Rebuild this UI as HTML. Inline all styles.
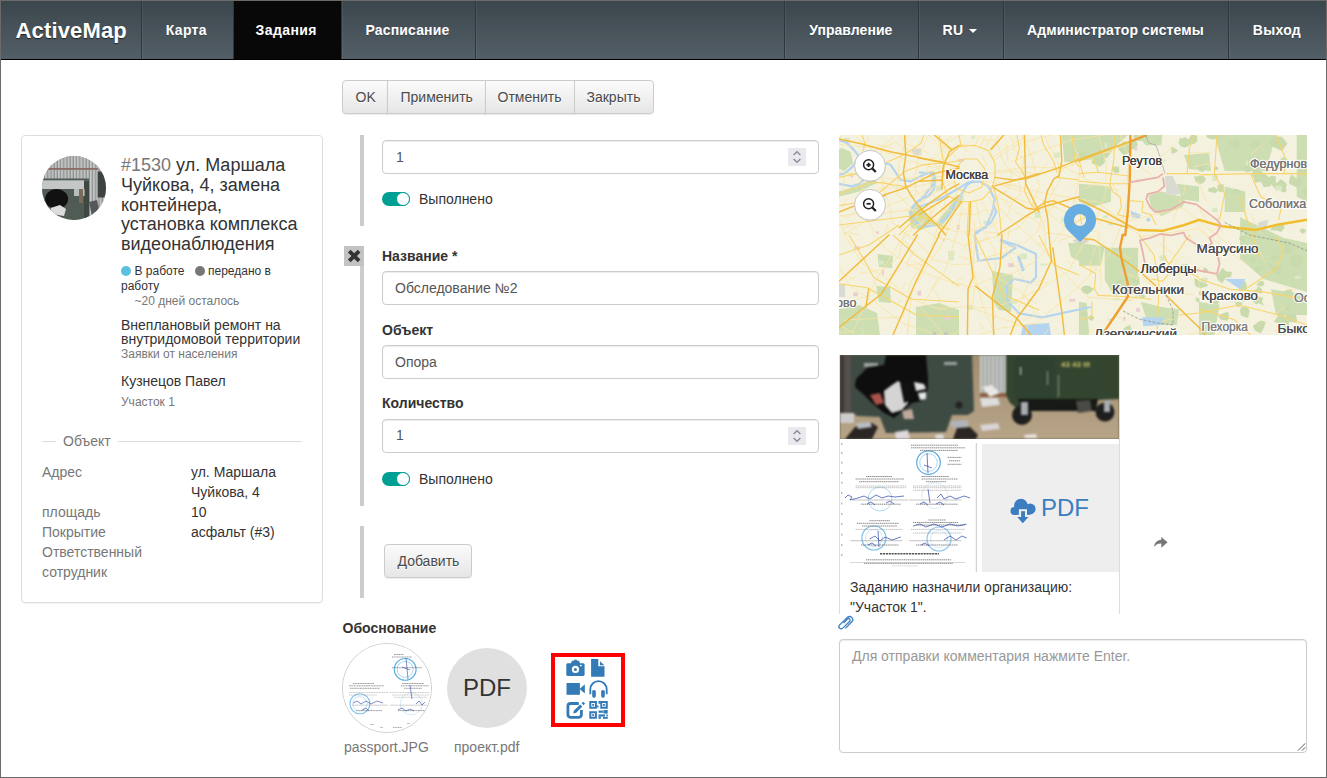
<!DOCTYPE html>
<html><head><meta charset="utf-8">
<style>
*{box-sizing:border-box;margin:0;padding:0}
html,body{width:1327px;height:778px;overflow:hidden;background:#fff}
body{font-family:"Liberation Sans",sans-serif;font-size:14px;color:#333;position:relative}
.frame{position:absolute;left:0;top:0;width:1327px;height:778px;border:1px solid #6a6a6a;z-index:50;pointer-events:none}
.abs{position:absolute}
.nav{position:absolute;left:0;top:0;width:1327px;height:60px;background:linear-gradient(#3b454c,#535f67);border-bottom:1px solid #000}
.nav .it{position:absolute;top:1px;height:59px;line-height:59px;color:#fff;font-weight:bold;font-size:14px;white-space:nowrap;text-shadow:0 1px 0 rgba(0,0,0,.25)}
.caret{display:inline-block;width:0;height:0;border-left:4px solid transparent;border-right:4px solid transparent;border-top:4px solid #fff;vertical-align:middle;margin-left:2px;margin-top:-2px}
.nav .dv{position:absolute;top:1px;width:1px;height:58px;background:#2f373d;box-shadow:1px 0 0 rgba(255,255,255,.06)}
.brand{position:absolute;left:15.5px;letter-spacing:.15px;top:1px;height:59px;line-height:59px;color:#fff;font-weight:bold;font-size:22px;text-shadow:0 1px 1px rgba(0,0,0,.6)}
.t{position:absolute;white-space:nowrap}
.btn{position:absolute;border:1px solid #ccc;background:linear-gradient(#fbfbfb,#e6e6e6);box-shadow:inset 0 1px 0 rgba(255,255,255,.15),0 1px 1px rgba(0,0,0,.075)}
.inp{position:absolute;border:1px solid #ccc;border-radius:4px;background:#fff;box-shadow:inset 0 1px 1px rgba(0,0,0,.075)}
.bar{position:absolute;left:360px;width:4px;background:#ccc}
.tog{position:absolute;width:28px;height:14px;border-radius:7px;background:#009f93}
.tog:after{content:"";position:absolute;right:0;top:0;width:14px;height:14px;border-radius:50%;background:#fff;border:1.5px solid #009f93;box-sizing:border-box}
.spin{position:absolute;width:18px;height:18px;background:#e9e9ee}
</style></head><body>
<div class="nav">
  <div class="brand">ActiveMap</div>
  <div class="dv" style="left:141px"></div>
  <div class="dv" style="left:233px"></div>
  <div class="abs" style="left:234px;top:1px;width:107px;height:58px;background:#080808"></div>
  <div class="dv" style="left:341px"></div>
  <div class="dv" style="left:475px"></div>
  <div class="dv" style="left:784px"></div>
  <div class="dv" style="left:918px"></div>
  <div class="dv" style="left:1003px"></div>
  <div class="dv" style="left:1228px"></div>
  <div class="it" style="left:165.8px;letter-spacing:.3px">Карта</div>
  <div class="it" style="left:255.6px;letter-spacing:.4px">Задания</div>
  <div class="it" style="left:365.5px;letter-spacing:.15px">Расписание</div>
  <div class="it" style="left:809.2px;letter-spacing:.05px">Управление</div>
  <div class="it" style="left:942.5px;letter-spacing:.5px">RU</div>
  <div class="abs" style="left:969px;top:29px;width:0;height:0;border-left:4px solid transparent;border-right:4px solid transparent;border-top:4px solid #fff"></div>
  <div class="it" style="left:1027px;letter-spacing:.1px">Администратор системы</div>
  <div class="it" style="left:1252.8px;letter-spacing:.3px">Выход</div>
</div>
<div class="btn" style="left:342px;top:80px;width:46px;height:34px;border-radius:4px 0 0 4px"></div>
<div class="btn" style="left:387px;top:80px;width:99px;height:34px"></div>
<div class="btn" style="left:485px;top:80px;width:90px;height:34px"></div>
<div class="btn" style="left:574px;top:80px;width:80px;height:34px;border-radius:0 4px 4px 0"></div>
<div class="t" style="left:355.5px;top:90px;font-size:14px;line-height:14px;color:#4a4a4a;font-weight:normal;text-shadow:0 1px 0 #fff">OK</div>
<div class="t" style="left:400.5px;top:90px;font-size:14px;line-height:14px;color:#4a4a4a;font-weight:normal;text-shadow:0 1px 0 #fff">Применить</div>
<div class="t" style="left:497.5px;top:90px;font-size:14px;line-height:14px;color:#4a4a4a;font-weight:normal;text-shadow:0 1px 0 #fff">Отменить</div>
<div class="t" style="left:586.5px;top:90px;font-size:14px;line-height:14px;color:#4a4a4a;font-weight:normal;text-shadow:0 1px 0 #fff">Закрыть</div>
<div class="abs" style="left:21px;top:135px;width:302px;height:468px;border:1px solid #ddd;border-radius:4px;box-shadow:0 1px 1px rgba(0,0,0,.05)"></div>
<div id="avatar" class="abs" style="left:42px;top:156px;width:64px;height:64px;border-radius:50%;overflow:hidden;background:#999"><svg width="64" height="64" viewBox="0 0 64 64" style="position:absolute;left:0;top:0;filter:blur(0.7px)">
<defs><pattern id="corr2" width="3.2" height="10" patternUnits="userSpaceOnUse"><rect width="3.2" height="10" fill="#a9abaa"/><rect width="1.2" height="10" fill="#c9cbca"/><rect x="2.4" width="0.8" height="10" fill="#8a8c8b"/></pattern></defs><g>
<rect width="64" height="64" fill="url(#corr2)"/>
<rect x="5.9" y="12" width="50" height="1.8" fill="#8a6a64"/>
<rect x="55.7" y="15.5" width="8.3" height="26" fill="#3e4342"/>
<rect x="0" y="22.5" width="47" height="2" fill="#50595a"/>
<rect x="0" y="24.5" width="42" height="8.5" fill="#c4c7c5"/>
<rect x="0" y="33" width="47" height="31" fill="#4f5b53"/>
<rect x="42" y="24.5" width="5" height="40" fill="#3e4842"/>
<rect x="32" y="33" width="10.6" height="7" fill="#b8bcbb"/>
<rect x="37" y="33" width="4" height="14" fill="#7a6a5a"/>
<ellipse cx="14.6" cy="43" rx="11.5" ry="10" fill="#111"/>
<path d="M8.5 52L18 49L24 53L22 60L10 58Z" fill="#dcdcdc"/>
<path d="M47 46L55 44L58 58L50 60Z" fill="#55585a"/>
<path d="M52 57L60 54L62 60L55 62Z" fill="#d8c9c0"/>
</g></svg>
</div>
<div class="t" style="left:121px;top:156px;font-size:18px;line-height:18px;color:#333;font-weight:normal;"><span style="color:#777">#1530</span> ул. Маршала</div>
<div class="t" style="left:121px;top:176px;font-size:18px;line-height:18px;color:#333;font-weight:normal;">Чуйкова, 4, замена</div>
<div class="t" style="left:121px;top:196px;font-size:18px;line-height:18px;color:#333;font-weight:normal;">контейнера,</div>
<div class="t" style="left:121px;top:215px;font-size:18px;line-height:18px;color:#333;font-weight:normal;">установка комплекса</div>
<div class="t" style="left:121px;top:235px;font-size:18px;line-height:18px;color:#333;font-weight:normal;">видеонаблюдения</div>
<div class="abs" style="left:121px;top:266px;width:10px;height:10px;border-radius:50%;background:#5bc0de"></div>
<div class="t" style="left:134.5px;top:265px;font-size:12px;line-height:12px;color:#333;font-weight:normal;">В работе</div>
<div class="abs" style="left:195px;top:266px;width:10px;height:10px;border-radius:50%;background:#777"></div>
<div class="t" style="left:208px;top:265px;font-size:12px;line-height:12px;color:#333;font-weight:normal;">передано в</div>
<div class="t" style="left:121px;top:280px;font-size:12px;line-height:12px;color:#333;font-weight:normal;">работу</div>
<div class="t" style="left:134.5px;top:295px;font-size:12px;line-height:12px;color:#777;font-weight:normal;">~20 дней осталось</div>
<div class="t" style="left:121px;top:318px;font-size:14px;line-height:14px;color:#333;font-weight:normal;">Внеплановый ремонт на</div>
<div class="t" style="left:121px;top:332px;font-size:14px;line-height:14px;color:#333;font-weight:normal;">внутридомовой территории</div>
<div class="t" style="left:121px;top:348px;font-size:12px;line-height:12px;color:#777;font-weight:normal;">Заявки от населения</div>
<div class="t" style="left:121px;top:374px;font-size:14px;line-height:14px;color:#333;font-weight:normal;">Кузнецов Павел</div>
<div class="t" style="left:121px;top:396px;font-size:12px;line-height:12px;color:#777;font-weight:normal;">Участок 1</div>
<div class="abs" style="left:42px;top:441px;width:14px;height:1px;background:#ddd"></div>
<div class="abs" style="left:118px;top:441px;width:184px;height:1px;background:#ddd"></div>
<div class="t" style="left:63px;top:434px;font-size:14px;line-height:14px;color:#777;font-weight:normal;">Объект</div>
<div class="t" style="left:42px;top:465px;font-size:14px;line-height:14px;color:#777;font-weight:normal;">Адрес</div>
<div class="t" style="left:191px;top:465px;font-size:14px;line-height:14px;color:#333;font-weight:normal;">ул. Маршала</div>
<div class="t" style="left:191px;top:485px;font-size:14px;line-height:14px;color:#333;font-weight:normal;">Чуйкова, 4</div>
<div class="t" style="left:42px;top:505px;font-size:14px;line-height:14px;color:#777;font-weight:normal;">площадь</div>
<div class="t" style="left:191px;top:505px;font-size:14px;line-height:14px;color:#333;font-weight:normal;">10</div>
<div class="t" style="left:42px;top:525px;font-size:14px;line-height:14px;color:#777;font-weight:normal;">Покрытие</div>
<div class="t" style="left:191px;top:525px;font-size:14px;line-height:14px;color:#333;font-weight:normal;">асфальт (#3)</div>
<div class="t" style="left:42px;top:545px;font-size:14px;line-height:14px;color:#777;font-weight:normal;">Ответственный</div>
<div class="t" style="left:42px;top:565px;font-size:14px;line-height:14px;color:#777;font-weight:normal;">сотрудник</div>
<div class="bar" style="top:135px;height:91px"></div>
<div class="inp" style="left:382px;top:140px;width:437px;height:34px"></div>
<div class="spin" style="left:788px;top:148px"></div>
<svg class="abs" style="left:788px;top:148px" width="18" height="18" viewBox="0 0 18 18"><path d="M5.6 7L9 3.8L12.4 7M5.6 11L9 14.2L12.4 11" fill="none" stroke="#8b8b99" stroke-width="1.4"/></svg>
<div class="t" style="left:396px;top:150px;font-size:14px;line-height:14px;color:#555;font-weight:normal;">1</div>
<div class="tog" style="left:382px;top:192px"></div>
<div class="t" style="left:419px;top:192px;font-size:14px;line-height:14px;color:#333;font-weight:normal;">Выполнено</div>
<div class="bar" style="top:246px;height:260px"></div>
<div class="abs" style="left:344px;top:246px;width:20px;height:20px;background:#c3c3c3"></div>
<svg class="abs" style="left:344px;top:246px" width="20" height="20" viewBox="344 246 20 20"><path d="M349.3 251.1L359.1 260.9M359.1 251.1L349.3 260.9" stroke="#333" stroke-width="3.9"/></svg>
<div class="t" style="left:382px;top:249px;font-size:14px;line-height:14px;color:#333;font-weight:bold;">Название *</div>
<div class="inp" style="left:382px;top:271px;width:437px;height:34px"></div>
<div class="t" style="left:395px;top:281px;font-size:14px;line-height:14px;color:#555;font-weight:normal;">Обследование №2</div>
<div class="t" style="left:382px;top:323px;font-size:14px;line-height:14px;color:#333;font-weight:bold;">Объект</div>
<div class="inp" style="left:382px;top:345px;width:437px;height:34px"></div>
<div class="t" style="left:395px;top:355px;font-size:14px;line-height:14px;color:#555;font-weight:normal;">Опора</div>
<div class="t" style="left:382px;top:396px;font-size:14px;line-height:14px;color:#333;font-weight:bold;">Количество</div>
<div class="inp" style="left:382px;top:419px;width:437px;height:34px"></div>
<div class="spin" style="left:788px;top:427px"></div>
<svg class="abs" style="left:788px;top:427px" width="18" height="18" viewBox="0 0 18 18"><path d="M5.6 7L9 3.8L12.4 7M5.6 11L9 14.2L12.4 11" fill="none" stroke="#8b8b99" stroke-width="1.4"/></svg>
<div class="t" style="left:396px;top:428px;font-size:14px;line-height:14px;color:#555;font-weight:normal;">1</div>
<div class="tog" style="left:382px;top:472px"></div>
<div class="t" style="left:419px;top:472px;font-size:14px;line-height:14px;color:#333;font-weight:normal;">Выполнено</div>
<div class="bar" style="top:526px;height:72px"></div>
<div class="btn" style="left:384px;top:544px;width:88px;height:34px;border-radius:4px"></div>
<div class="t" style="left:397.5px;top:554px;font-size:14px;line-height:14px;color:#4a4a4a;font-weight:normal;text-shadow:0 1px 0 #fff">Добавить</div>
<div class="t" style="left:342.5px;top:621px;font-size:14px;line-height:14px;color:#333;font-weight:bold;">Обоснование</div>
<div id="passport" class="abs" style="left:342px;top:643px;width:90px;height:90px;border-radius:50%;border:1px solid #ccc;background:#fff;overflow:hidden"><svg width="88" height="88" viewBox="1 1 88 88" style="position:absolute;left:0;top:0">
<rect width="90" height="90" fill="#fff"/>
<g fill="none" stroke="#5aaee0" stroke-width="1.1">
<circle cx="63.2" cy="26.4" r="10.9"/><circle cx="63.2" cy="26.4" r="8" stroke-width="0.5"/>
<circle cx="17.9" cy="60.8" r="10" stroke="#7cc0ea"/><circle cx="17.9" cy="60.8" r="7.2" stroke="#9ccfee" stroke-width="0.5"/>
<circle cx="69.3" cy="60.8" r="11" stroke="#d3e6f3" stroke-width="0.9"/>
</g>
<g fill="none" stroke="#6e6e6e" stroke-width="0.7" stroke-dasharray="1.2 0.45">
<path d="M52 11.5H62M50 14H70M50 24.7H80" />
<path d="M11 40.5H32M7 42.8H42M8 45.3H38M60 40.5H82M59 42.8H87M62 45.3H80"/>
<path d="M7 49.5H46M7 52H35M48 49.5H87M50 52H87M52 54.3H85" stroke="#999" stroke-width="0.5"/>
<path d="M10 62.2H46M48 62.2H85" stroke="#888" stroke-width="0.4" stroke-dasharray="none"/>
<path d="M14 67.6H40M56 67.6H85"/>
<path d="M51 84.5H60" stroke="#888"/>
</g>
<g fill="none" stroke="#2d45a8" stroke-width="0.6" stroke-linejoin="round">
<path d="M11 60L15 58L19 61L24 58L29 61L35 58L41 60"/><path d="M74 61L77 58L80 62L83 59"/><path d="M56 67L60 65L64 68L68 66L72 68"/><path d="M64 15L66 36M60 24L68 27M68 42L70 56"/><path d="M20 67L24 65L27 68"/>
</g>
<g fill="#999"><rect x="28" y="81" width="4" height="0.6"/><rect x="38" y="84" width="3" height="0.6"/><rect x="65" y="80" width="3" height="0.6"/></g>
</svg>
</div>
<div class="abs" style="left:447px;top:648px;width:80px;height:80px;border-radius:50%;background:#e0e0e0"></div>
<div class="t" style="left:463px;top:676px;font-size:24px;line-height:24px;color:#333;font-weight:normal;">PDF</div>
<div class="t" style="left:344px;top:740px;font-size:14px;line-height:14px;color:#777;font-weight:normal;">passport.JPG</div>
<div class="t" style="left:454px;top:740px;font-size:14px;line-height:14px;color:#777;font-weight:normal;">проект.pdf</div>
<div class="abs" style="left:551px;top:653px;width:74px;height:74px;border:4px solid #f00"></div>
<svg class="abs" style="left:551px;top:653px" width="74" height="74" viewBox="551 653 74 74"><g fill="#337ab7">
<path d="M567.3 663.2H570.9L572 660.8H574L574.3 659.8H576.7L577 660.8H579L580.1 663.2H583.6L584.6 664.2V674.9L583.6 675.9H567.3L566.3 674.9V664.2Z"/>
<circle cx="575.45" cy="669.45" r="3.6" fill="#fff"/><circle cx="575.45" cy="669.45" r="1.5"/>
<rect x="579.9" y="664.9" width="1.9" height="1.3" fill="#fff"/>
<path d="M591.1 659.1H598.3V666.3H604.5V676.8H591.1Z"/><path d="M600 661.2L604.4 665.2H600Z"/>
<rect x="566.5" y="683" width="13.4" height="11.8"/><path d="M579.6 688.9L584.8 684.2V693.4Z"/>
<path d="M590.3 694.2V689.3A8.2 8.2 0 0 1 606.7 689.3V694.2" fill="none" stroke="#337ab7" stroke-width="1.8"/>
<rect x="592.2" y="689.9" width="3.6" height="7.8" rx="1.6"/><rect x="601.2" y="689.9" width="3.6" height="7.8" rx="1.6"/>
<path d="M578.8 703.5H570.6Q567.9 703.5 567.9 706.2V714.6Q567.9 717.3 570.6 717.3H578.8Q581.4 717.3 581.4 714.6V710" fill="none" stroke="#337ab7" stroke-width="2.8"/>
<path d="M573.2 713.6L574 710.6L580.2 704.4L582.4 706.6L576.2 712.8Z"/><path d="M581.5 703.2L583.3 701.8L585 703.5L583.6 705.3Z"/>
<path d="M589.3 701.1H596.9V708.7H589.3ZM591.3 703.1V706.7H594.9V703.1Z" fill-rule="evenodd"/>
<rect x="592.2" y="704" width="1.8" height="1.8"/>
<path d="M598.5 701.1H607.75V708.7H600.3V703.8H598.5ZM602.2 703.1V706.7H605.75V703.1Z" fill-rule="evenodd"/>
<rect x="603" y="704.1" width="1.9" height="1.8"/>
<path d="M589.3 711.2H596.9V718.8H589.3ZM591.3 713.2V716.8H594.9V713.2Z" fill-rule="evenodd"/>
<rect x="592.2" y="714.2" width="1.8" height="1.8"/>
<rect x="596.9" y="705.5" width="1.6" height="2"/>
<rect x="598.5" y="710.6" width="4.6" height="2.2"/><rect x="603.5" y="710" width="4.2" height="3.6"/>
<rect x="598.5" y="714.4" width="6.5" height="2.2"/><rect x="606.3" y="714.4" width="1.45" height="2.2"/>
<rect x="598.5" y="716.5" width="2.4" height="2.3"/><rect x="603" y="717" width="4.75" height="1.8"/>
</g></svg>

<div id="map" class="abs" style="left:839px;top:135px;width:468px;height:200px;background:#f5f2dd;overflow:hidden"><svg width="468" height="200" viewBox="0 0 468 200" style="position:absolute;left:0;top:0">
<rect width="468" height="200" fill="#f4f2df"/>
<g fill="#cddeb3"><path d="M0.0 56.6L16.7 51.4L34.7 43.7L38.6 47.6L20.6 56.6L0.0 61.7Z"/><path d="M2.6 12.9L11.6 16.7L14.1 28.3L5.1 36.0L0.0 33.4L0.0 14.0Z"/><path d="M75.8 69.4L82.3 72.0L88.7 82.3L97.7 88.7L82.3 95.0L72.0 92.5L69.4 77.0Z"/><path d="M37.0 151.0L51.0 152.0L52.0 168.0L40.0 167.0Z"/><path d="M38.5 119.0L54.0 121.0L53.0 133.0L40.0 132.0Z"/><path d="M0.0 174.0L20.0 170.0L38.0 178.0L41.0 200.0L0.0 200.0Z"/><path d="M77.0 172.0L100.0 168.0L120.0 175.0L120.0 200.0L77.0 200.0Z"/><path d="M153.0 136.0L174.0 140.0L172.0 177.0L160.0 175.0L155.0 168.0Z"/><path d="M97.0 88.0L120.0 60.0L125.0 63.0L102.0 92.0Z"/><path d="M222.8 0.0L240.0 0.0L240.0 27.0L225.4 27.0Z"/><path d="M240.0 0.0L288.8 0.0L274.7 12.9L268.3 23.0L240.0 25.7Z"/><path d="M240.0 48.8L272.0 51.4L272.0 66.8L252.9 72.0L240.0 66.8Z"/><path d="M309.4 60.4L322.3 56.6L342.8 61.7L346.7 66.8L342.8 72.0L322.3 81.0L312.0 72.0Z"/><path d="M337.7 48.8L360.0 51.4L360.0 66.8L342.8 64.3Z"/><path d="M297.8 0.0L323.5 0.0L322.3 10.3L306.8 10.3Z"/><path d="M265.7 112.8L299.0 112.8L299.0 159.0L274.7 160.4L265.7 145.0Z"/><path d="M240.0 107.7L265.7 111.6L261.9 130.8L240.0 130.8Z"/><path d="M301.7 166.8L322.3 172.0L340.3 174.5L337.7 190.0L309.4 190.0Z"/><path d="M240.0 166.8L247.7 168.0L250.3 200.0L240.0 200.0Z"/><path d="M375.4 0.0L437.0 0.0L426.9 36.0L385.7 36.0Z"/><path d="M385.7 51.4L406.3 56.6L406.3 77.0L385.7 77.0Z"/><path d="M401.1 82.3L444.9 102.9L468.0 108.0L468.0 156.9L424.3 144.0L401.1 123.4Z"/><path d="M457.7 0.0L468.0 0.0L468.0 66.9L457.7 61.7Z"/><path d="M432.0 154.3L468.0 159.4L468.0 180.0L437.0 180.0Z"/><path d="M360.0 167.0L380.6 169.7L375.4 200.0L360.0 200.0Z"/><path d="M229.0 108.0L240.0 108.0L240.0 126.0L232.0 122.0Z"/><path d="M345.0 20.0L370.0 18.0L372.0 36.0L350.0 34.0Z"/></g>
<g fill="#c9dbad">
<path d="M402.4 9.1L398.1 14.8L392.7 11.6L389.5 9.1L391.9 5.7L398.1 3.3Z"/>
<path d="M429.9 35.0L430.4 36.3L428.6 37.3L426.6 37.3L425.0 35.7L425.3 34.3L427.1 33.4L428.6 32.3L430.3 33.4Z"/>
<path d="M450.0 27.9L449.9 32.2L443.9 34.6L437.2 34.4L437.9 27.9L440.4 25.1L443.9 22.0L449.0 24.8Z"/>
<path d="M436.9 45.9L436.0 49.7L432.2 48.2L429.0 48.8L428.7 45.9L428.9 43.0L432.2 40.7L436.7 41.1Z"/>
<path d="M401.8 56.4L399.3 59.5L395.5 60.1L393.1 56.4L395.5 53.9L399.0 54.3Z"/>
<path d="M429.9 42.4L423.7 44.9L420.5 47.3L415.4 47.5L415.2 43.6L413.1 40.3L414.2 33.9L420.8 35.5L426.1 38.9Z"/>
<path d="M463.6 46.8L462.4 50.3L458.1 52.4L453.8 50.6L450.0 48.5L450.2 44.6L452.3 39.3L457.9 43.7L462.0 43.1Z"/>
<path d="M469.6 36.1L465.6 39.7L461.6 38.0L458.9 36.1L460.0 32.4L464.7 33.3Z"/>
<path d="M423.5 8.8L420.0 12.1L413.6 13.9L409.9 8.8L415.0 5.7L419.7 4.6Z"/>
<path d="M434.3 47.3L431.0 51.6L424.8 52.2L422.7 48.4L421.5 45.6L424.6 39.5L430.1 42.2Z"/>
<path d="M469.7 57.3L469.1 59.8L465.3 62.7L464.4 58.5L463.2 55.8L465.5 53.7L469.2 54.3Z"/>
<path d="M384.7 53.3L385.5 56.7L381.5 57.0L379.1 56.0L378.6 53.3L378.3 50.3L381.5 48.7L384.8 49.8Z"/>
<path d="M379.6 32.9L378.1 35.2L375.2 35.0L374.7 32.9L375.8 31.3L377.9 31.4Z"/>
<path d="M379.1 54.6L377.5 57.5L375.1 58.3L372.6 56.9L368.8 56.5L369.7 53.0L372.6 52.8L375.0 51.5L376.3 52.9Z"/>
<path d="M422.5 28.9L421.3 34.8L413.9 34.8L408.6 28.9L413.8 23.7L420.6 23.6Z"/>
<path d="M414.7 32.0L413.1 35.9L407.7 37.5L403.1 33.8L405.8 30.8L408.1 29.7L410.9 29.6Z"/>
<path d="M447.0 53.8L447.9 56.1L444.7 57.5L442.3 56.4L440.4 53.8L442.4 51.9L444.7 51.8L446.7 51.9Z"/>
<path d="M366.4 33.2L364.1 37.0L360.5 36.2L358.4 33.2L360.5 31.2L365.3 29.4Z"/>
<path d="M448.0 49.2L446.6 53.4L441.6 53.6L435.6 53.4L432.5 49.2L438.7 47.3L441.6 44.2L445.4 46.4Z"/>
<path d="M383.4 0.7L377.2 3.6L374.2 4.5L370.4 3.7L367.7 2.2L367.1 -1.5L370.0 -3.9L374.1 -3.6L376.7 -1.5Z"/>
<path d="M367.1 44.0L364.9 47.7L360.3 49.4L356.6 46.5L355.0 41.6L360.7 41.1L364.2 40.7Z"/>
<path d="M448.4 8.4L442.9 15.9L435.1 12.3L430.1 8.4L434.9 1.2L442.8 1.7Z"/>
<path d="M406.2 103.0L405.8 107.1L401.5 105.9L399.8 103.0L401.9 101.4L405.0 100.1Z"/>
<path d="M416.9 125.3L415.6 126.9L413.7 127.3L412.5 126.6L410.3 125.3L411.3 122.9L413.7 122.6L415.8 123.5Z"/>
<path d="M423.2 133.3L421.1 134.6L419.9 136.6L417.3 136.9L416.0 134.6L415.8 132.1L418.0 131.9L419.7 131.5L421.0 131.9Z"/>
<path d="M443.7 133.9L442.4 139.4L436.7 138.8L432.1 135.7L431.8 131.8L437.1 131.3L442.2 130.2Z"/>
<path d="M453.6 158.3L453.5 160.0L451.3 162.2L447.6 161.9L445.0 160.1L445.1 157.0L447.8 154.7L451.5 153.8L453.3 156.2Z"/>
<path d="M455.1 110.0L450.3 112.3L445.8 113.1L445.0 110.0L444.7 103.4L450.4 105.9Z"/>
<path d="M467.4 95.2L466.0 97.5L463.3 99.0L461.6 97.0L460.3 95.2L462.0 94.2L463.3 93.1L464.8 94.1Z"/>
<path d="M424.8 148.8L423.9 151.2L421.5 151.4L419.9 150.1L417.9 148.8L419.9 147.5L421.5 147.5L422.7 147.6Z"/>
<path d="M423.0 155.5L422.7 158.8L419.4 157.7L416.1 158.1L414.4 155.5L417.4 154.2L419.4 151.3L422.4 153.5Z"/>
<path d="M464.4 124.0L462.8 127.4L457.2 131.8L453.1 126.1L452.7 121.1L458.0 119.5L462.0 120.9Z"/>
<path d="M462.1 128.5L457.6 130.2L455.2 131.0L452.9 130.2L451.3 128.5L450.7 124.1L455.2 124.9L458.7 125.8Z"/>
<path d="M425.7 94.3L426.1 97.5L423.0 96.6L420.8 96.1L419.2 94.3L419.4 90.6L423.0 92.9L426.3 90.9Z"/>
<path d="M435.6 131.1L434.2 132.5L432.6 133.5L431.2 132.3L428.9 131.9L429.1 130.1L430.5 128.1L432.5 129.5L433.3 130.5Z"/>
<path d="M445.6 92.6L442.4 97.1L437.8 95.7L431.1 95.2L434.2 90.5L437.9 89.5L444.2 87.6Z"/>
<path d="M425.4 148.8L423.7 151.3L421.0 150.4L417.0 150.8L419.3 148.0L420.7 146.0L423.9 146.0Z"/>
<path d="M454.5 115.4L451.1 118.2L445.7 119.5L443.1 115.4L447.1 112.4L450.7 111.8Z"/>
<path d="M438.6 103.1L436.8 105.8L434.1 104.5L431.7 105.9L429.6 104.1L430.4 102.0L432.1 101.3L434.1 101.5L435.8 101.5Z"/>
<path d="M441.0 122.7L438.7 124.4L436.2 124.4L433.8 126.2L431.6 124.2L432.2 121.5L433.9 119.7L436.2 120.2L438.1 121.0Z"/>
<path d="M422.8 166.2L424.8 170.7L419.9 168.3L417.5 169.5L415.0 167.7L412.2 164.2L417.0 161.9L420.4 161.7L424.4 162.9Z"/>
<path d="M407.8 150.2L407.1 155.5L400.3 155.6L399.7 150.2L401.4 144.9L406.4 146.5Z"/>
<path d="M450.0 191.1L448.2 195.1L444.1 193.7L438.6 193.4L441.6 190.1L443.6 186.6L450.1 184.5Z"/>
<path d="M469.6 163.2L468.9 165.6L465.9 164.7L463.1 163.2L465.4 160.7L468.7 160.2Z"/>
<path d="M410.3 164.0L407.9 165.5L405.9 166.7L403.1 166.1L402.5 164.0L403.2 162.1L405.9 159.7L409.5 161.6Z"/>
<path d="M425.6 191.0L424.8 193.0L421.8 198.5L415.9 195.6L413.8 191.0L418.3 187.5L421.8 185.5L426.5 186.7Z"/>
<path d="M403.6 168.4L401.5 171.5L398.3 172.3L396.5 169.4L396.0 167.5L398.7 166.8L401.1 166.5Z"/>
<path d="M453.6 183.2L451.3 185.7L448.2 185.8L448.0 183.2L447.9 180.3L451.0 181.6Z"/>
<path d="M453.8 182.2L454.9 185.1L451.5 186.4L447.8 186.2L447.7 182.9L446.5 180.8L447.8 179.1L451.4 178.6L453.8 180.4Z"/>
<path d="M410.8 176.1L409.0 183.0L402.2 180.8L400.9 176.1L402.2 171.8L408.5 172.0Z"/>
<path d="M449.7 184.4L445.6 187.5L441.2 188.5L434.9 186.9L437.6 182.8L440.7 175.8L445.6 180.6Z"/>
<path d="M457.8 183.6L458.1 187.2L454.1 187.3L450.1 186.9L448.0 183.6L450.5 181.4L454.1 178.6L457.1 180.7Z"/>
<path d="M451.7 172.9L450.9 174.4L449.4 176.4L446.8 174.9L446.5 173.8L446.0 172.0L447.6 171.1L449.4 168.9L451.8 171.3Z"/>
<path d="M389.9 180.7L388.6 185.8L382.2 185.1L379.0 180.7L384.1 178.3L389.2 176.8Z"/>
<path d="M298.6 9.6L297.5 13.8L292.3 14.2L288.9 11.3L288.8 7.4L292.7 6.0L297.2 5.4Z"/>
<path d="M259.7 26.9L257.8 28.8L255.9 29.5L253.9 29.0L252.6 26.9L254.1 25.5L255.9 25.4L257.1 26.0Z"/>
<path d="M280.1 33.5L280.4 37.3L276.9 38.4L273.7 35.8L273.8 33.5L274.4 31.6L276.9 31.5L279.9 31.7Z"/>
<path d="M247.2 19.8L245.5 21.4L243.3 23.3L241.3 21.0L238.5 19.8L240.7 18.2L243.3 17.3L245.5 17.6Z"/>
<path d="M304.5 2.0L302.7 5.9L298.0 6.1L295.5 3.5L294.4 2.0L295.0 -1.3L298.0 -1.7L302.8 -1.4Z"/>
<path d="M271.4 18.1L268.2 20.3L265.4 21.6L261.5 23.5L261.8 19.2L258.8 16.3L261.6 13.6L265.5 15.5L267.9 16.5Z"/>
<path d="M266.6 26.2L264.2 29.6L260.1 32.1L257.0 29.1L252.5 26.2L255.0 23.1L260.1 23.1L264.8 21.2Z"/>
<path d="M291.6 11.4L290.5 17.5L284.8 20.4L280.2 15.3L278.3 11.4L282.1 8.5L284.8 6.3L290.3 7.1Z"/>
<path d="M360.4 165.2L360.7 168.1L357.4 166.4L356.6 165.2L356.8 162.4L360.4 163.2Z"/>
<path d="M366.0 149.1L362.2 153.4L356.9 151.6L355.8 149.1L355.5 143.0L360.8 146.1Z"/>
<path d="M365.7 158.2L364.7 159.6L362.3 160.6L359.9 159.8L359.9 156.7L362.6 156.0L365.5 155.4Z"/>
<path d="M306.5 161.5L304.8 163.0L303.5 163.4L302.1 162.6L301.1 162.2L299.3 160.7L301.7 159.4L303.7 159.0L305.3 160.1Z"/>
<path d="M390.4 140.8L386.4 143.0L383.2 148.6L379.1 145.3L377.1 140.8L379.7 138.6L383.2 132.7L388.1 136.9Z"/>
<path d="M369.4 149.8L367.1 151.9L365.1 152.0L362.7 152.9L360.5 151.1L361.6 148.9L363.3 147.5L365.3 145.9L366.6 148.4Z"/>
<path d="M380.7 166.3L379.6 167.7L378.0 169.9L375.7 169.1L373.5 167.7L374.3 165.5L376.2 164.2L377.8 163.8L380.6 164.5Z"/>
<path d="M369.6 135.6L367.6 137.2L365.0 137.8L363.7 136.4L364.1 135.0L364.9 132.1L367.7 133.4Z"/>
<path d="M349.1 131.3L350.9 135.0L347.2 135.8L343.4 136.1L341.5 133.2L341.5 129.8L344.5 129.2L346.9 128.8L349.2 129.1Z"/>
<path d="M392.6 139.4L391.8 142.1L388.7 142.7L384.7 141.0L385.5 137.5L388.7 136.5L392.9 136.8Z"/>
<path d="M350.9 8.0L349.3 11.3L345.1 12.5L341.7 10.3L342.1 6.4L344.9 3.8L349.6 4.8Z"/>
<path d="M358.5 6.1L356.1 8.2L352.9 9.6L348.9 9.8L347.5 6.1L349.9 3.7L352.9 -1.4L357.9 0.7Z"/>
<path d="M350.0 8.2L346.3 11.9L342.0 11.8L339.5 8.2L340.8 2.8L346.3 5.1Z"/>
<path d="M352.2 6.3L350.3 9.9L346.4 12.4L343.2 9.5L340.6 6.3L342.7 3.4L346.4 2.0L348.6 4.0Z"/>
<path d="M339.1 15.2L336.8 17.7L332.3 18.7L332.5 15.2L332.2 11.3L336.0 13.6Z"/>
<path d="M255.0 154.0L251.9 156.9L248.6 159.4L243.5 157.3L241.7 154.0L244.5 151.0L248.6 150.4L251.0 151.6Z"/>
<path d="M282.6 147.0L282.5 148.2L280.8 148.9L278.8 149.2L277.4 148.1L278.6 146.4L278.8 144.8L280.9 143.6L282.3 145.6Z"/>
<path d="M300.5 144.5L300.5 149.9L294.7 147.8L293.0 144.5L296.0 142.5L299.8 142.0Z"/>
<path d="M248.7 179.5L247.5 181.0L245.0 181.9L242.3 180.8L241.0 177.2L244.9 177.3L248.0 177.6Z"/>
<path d="M255.2 182.8L253.3 186.0L250.0 184.5L249.0 182.8L250.4 180.7L253.2 180.2Z"/>
<path d="M292.5 194.6L290.5 198.3L286.6 197.8L283.3 196.5L284.5 193.7L286.7 191.8L291.2 190.1Z"/>
</g>
<g fill="#dbe8c6">
<rect x="172.6" y="164.5" width="5.9" height="4.2"/>
<rect x="120.7" y="60.4" width="4.1" height="3.3"/>
<rect x="201.6" y="128.4" width="6.7" height="2.2"/>
<rect x="265.6" y="7.9" width="2.6" height="5.2"/>
<rect x="269.3" y="183.7" width="4.2" height="2.1"/>
<rect x="181.2" y="118.4" width="6.7" height="5.9"/>
<rect x="222.5" y="82.5" width="2.5" height="4.6"/>
<rect x="99.3" y="30.4" width="2.1" height="2.0"/>
<rect x="320.0" y="24.3" width="6.8" height="2.4"/>
<rect x="406.9" y="25.8" width="2.1" height="4.9"/>
<rect x="113.4" y="146.7" width="2.9" height="2.2"/>
<rect x="362.2" y="142.7" width="6.3" height="4.9"/>
<rect x="39.4" y="125.7" width="5.5" height="3.8"/>
<rect x="436.3" y="50.8" width="6.8" height="4.9"/>
<rect x="5.3" y="2.9" width="5.3" height="5.3"/>
<rect x="37.3" y="62.2" width="5.6" height="2.7"/>
<rect x="402.9" y="97.3" width="2.3" height="3.5"/>
<rect x="269.1" y="87.7" width="5.4" height="2.6"/>
<rect x="373.2" y="72.7" width="5.2" height="4.5"/>
<rect x="195.6" y="77.1" width="5.9" height="5.8"/>
<rect x="367.2" y="113.4" width="3.5" height="2.2"/>
<rect x="455.8" y="140.7" width="6.1" height="3.3"/>
<rect x="283.5" y="195.5" width="6.2" height="4.4"/>
<rect x="144.4" y="85.7" width="6.4" height="3.5"/>
<rect x="320.5" y="120.4" width="6.5" height="5.2"/>
<rect x="132.6" y="0.3" width="3.3" height="3.7"/>
<rect x="274.5" y="163.2" width="6.4" height="2.2"/>
<rect x="390.0" y="162.4" width="6.3" height="4.3"/>
<rect x="128.2" y="170.2" width="6.0" height="4.7"/>
<rect x="427.6" y="69.4" width="2.4" height="4.2"/>
<rect x="373.2" y="40.1" width="5.8" height="5.7"/>
<rect x="109.5" y="121.4" width="5.4" height="3.9"/>
<rect x="96.7" y="50.9" width="5.8" height="5.2"/>
<rect x="215.1" y="17.5" width="6.0" height="5.1"/>
<rect x="109.0" y="115.9" width="6.5" height="5.5"/>
<rect x="244.2" y="95.3" width="4.9" height="2.8"/>
<rect x="90.0" y="36.1" width="5.5" height="3.5"/>
<rect x="264.2" y="80.5" width="4.6" height="2.6"/>
<rect x="20.9" y="199.4" width="3.9" height="2.4"/>
<rect x="296.1" y="157.5" width="2.8" height="4.4"/>
</g>
<g fill="#e9cfcf">
<rect x="103.5" y="103.9" width="2.1" height="2.1"/>
<rect x="297.1" y="173.2" width="3.9" height="3.7"/>
<rect x="78.5" y="155.8" width="3.7" height="4.8"/>
<rect x="230.2" y="163.8" width="5.9" height="2.8"/>
<rect x="11.4" y="40.2" width="2.7" height="2.3"/>
<rect x="15.3" y="111.5" width="5.5" height="3.4"/>
<rect x="284.2" y="182.0" width="2.3" height="3.8"/>
<rect x="119.2" y="24.0" width="5.8" height="2.8"/>
<rect x="169.3" y="128.1" width="5.8" height="4.0"/>
<rect x="117.9" y="89.7" width="2.6" height="4.9"/>
<rect x="297.5" y="44.3" width="2.2" height="2.8"/>
<rect x="105.6" y="180.6" width="5.6" height="4.5"/>
<rect x="14.1" y="157.3" width="4.8" height="3.9"/>
<rect x="295.6" y="11.2" width="2.6" height="4.3"/>
<rect x="281.8" y="135.4" width="3.2" height="3.8"/>
<rect x="227.4" y="21.1" width="3.3" height="2.8"/>
<rect x="37.2" y="96.3" width="2.7" height="2.7"/>
<rect x="42.9" y="135.5" width="2.1" height="4.2"/>
</g>
<g fill="#d9dbd3"><path d="M72.0 14.1L82.3 12.9L82.3 20.6L74.5 20.6Z"/><path d="M0.0 149.0L6.0 149.0L6.0 162.0L0.0 162.0Z"/><path d="M326.0 41.0L333.8 41.0L341.5 59.0L327.4 60.4Z"/><path d="M419.1 87.4L429.4 84.8L426.9 95.1L419.1 95.1Z"/></g>
<g fill="none" stroke="#b5d4ef" stroke-width="2.2" stroke-linejoin="round"><path d="M0.0 5.1L7.7 7.7L15.4 15.4L19.3 20.6L15.4 29.6L10.3 34.7L5.1 38.6L0.0 39.8"/><path d="M80.0 37.3L95.4 38.6L92.9 51.4L80.0 66.8"/><path d="M80.0 72.0L100.6 64.3L118.6 54.0L128.8 47.6L140.4 46.3L149.4 51.4L155.8 64.3L153.3 77.0L146.8 92.5L135.3 97.7"/><path d="M0.0 48.8L12.9 51.4L20.6 48.8L25.7 43.7"/><path d="M42.4 27.0L51.4 29.6L56.6 37.3L61.7 45.0L72.0 46.3L84.8 39.8L92.5 37.3L96.4 42.4L95.0 54.0L90.0 60.4L79.7 65.6L73.3 72.0L72.0 79.7L77.0 87.4L87.4 91.3L97.7 90.0L108.0 82.3L115.7 69.4L120.0 63.0L128.0 50.0L135.0 45.0"/><path d="M154.7 70.7L157.3 77.0L152.0 87.4L141.8 95.0L135.4 100.0L139.3 125.7L162.4 123.0L176.5 112.8L161.0 105.0"/><path d="M161.0 105.0L177.8 110.0L197.0 119.0L197.0 142.0L192.0 147.6L175.0 143.7L167.6 151.4L168.8 166.8L180.4 178.4L203.5 182.3L240.0 174.5L252.0 172.0"/></g>
<g fill="#b5d4ef"><path d="M184 190L210 188L212 200L182 200Z"/><path d="M291.4 75.8L301.7 79.7L300.4 83.5L292.7 82.3Z"/><circle cx="309.4" cy="84.8" r="2"/><path d="M303 182.3L324.8 182.3L322.3 190L304.3 191.3Z"/><path d="M385.7 144L406.3 144L401.1 154.3Z"/><path d="M180 120L186 135L183 137L178 122Z"/></g>
<g fill="none" stroke="#f9e3a4" stroke-width="0.8">
<path d="M145.0 39.3L171.9 36.3L199.1 38.8L225.9 32.0L253.1 47.7L279.6 55.6"/>
<path d="M156.2 46.6L206.9 58.5L258.4 66.9L302.7 101.4L359.2 93.7L404.1 126.8"/>
<path d="M144.3 44.7L192.4 59.2L237.1 83.3L289.2 86.1L343.5 72.9L387.5 107.8"/>
<path d="M143.1 47.5L171.5 61.6L201.4 72.2L227.1 91.8L259.6 97.1L262.3 152.1"/>
<path d="M165.0 67.0L178.1 78.3L195.4 83.8L206.8 97.6L226.0 100.1L243.2 105.0"/>
<path d="M147.9 60.7L173.2 85.8L199.9 109.6L223.4 136.5L248.5 162.0L292.8 165.6"/>
<path d="M141.9 64.9L153.2 86.2L164.0 107.9L174.9 129.4L188.9 149.4L176.6 181.0"/>
<path d="M136.9 66.9L142.0 92.2L156.0 114.9L156.6 141.8L184.8 158.9L198.0 181.2"/>
<path d="M135.1 84.6L135.8 106.7L133.9 128.9L136.1 150.8L132.6 173.1L175.8 187.9"/>
<path d="M131.3 84.9L132.7 128.2L143.8 170.8L161.5 211.9L118.8 258.0L154.8 300.3"/>
<path d="M125.7 55.7L118.6 96.6L106.0 136.4L81.4 172.3L122.8 222.0L93.8 260.9"/>
<path d="M123.0 54.8L104.2 107.3L73.0 154.4L67.3 212.3L71.1 271.6L36.9 319.6"/>
<path d="M120.8 53.7L100.8 82.5L91.8 117.6L71.8 146.8L63.9 182.0L4.4 185.1"/>
<path d="M98.1 72.7L61.2 106.2L34.6 149.3L14.2 196.6L-54.6 200.5L-66.3 259.2"/>
<path d="M96.5 71.1L83.8 87.2L65.6 97.8L60.5 121.0L44.9 134.5L20.1 138.5"/>
<path d="M114.7 47.1L93.2 59.2L73.7 74.8L47.2 77.4L24.7 87.6L3.5 100.3"/>
<path d="M113.8 45.0L81.3 57.6L49.1 70.8L15.1 79.2L-20.1 83.6L-57.9 74.8"/>
<path d="M113.4 43.6L77.2 51.5L40.0 53.8L9.2 82.4L-31.9 72.4L-71.1 60.1"/>
<path d="M113.0 40.7L54.8 44.1L-3.6 36.8L-61.8 47.4L-119.2 62.5L-173.3 -16.3"/>
<path d="M101.6 34.1L68.3 25.4L36.1 12.8L1.3 9.6L-22.5 -27.1L-69.7 16.2"/>
<path d="M86.5 25.2L71.4 16.8L56.8 7.2L35.7 15.5L20.6 6.2L8.8 -11.5"/>
<path d="M89.6 18.2L68.9 9.2L51.8 -6.3L26.2 -5.7L8.7 -21.3L-12.8 -28.6"/>
<path d="M108.9 20.6L79.4 -11.8L52.6 -46.6L-0.4 -52.7L-8.4 -109.3L-68.1 -108.3"/>
<path d="M111.5 18.1L81.7 -13.7L50.0 -43.6L16.1 -71.4L-26.4 -89.3L-49.1 -129.2"/>
<path d="M120.1 26.7L100.2 0.3L84.9 -29.1L79.5 -63.9L47.6 -83.7L11.1 -97.4"/>
<path d="M113.4 -2.2L95.4 -51.3L88.7 -104.0L84.3 -156.8L48.7 -201.1L-10.3 -232.9"/>
<path d="M122.6 -4.5L118.4 -41.2L114.0 -77.8L114.3 -114.9L78.3 -145.6L121.8 -189.1"/>
<path d="M128.8 -5.0L131.0 -32.1L118.7 -58.8L121.7 -86.2L108.2 -112.2L132.4 -140.7"/>
<path d="M135.7 12.8L141.9 -5.1L141.1 -24.6L150.6 -41.8L153.3 -60.6L144.6 -81.4"/>
<path d="M140.3 14.4L149.0 -4.4L158.5 -22.8L161.5 -44.0L180.4 -58.0L183.3 -79.6"/>
<path d="M144.1 16.4L168.1 -25.0L205.4 -57.2L232.1 -97.0L219.5 -159.7L253.5 -196.3"/>
<path d="M157.2 4.9L170.4 -14.0L191.1 -26.8L188.8 -57.4L230.1 -53.1L254.6 -60.0"/>
<path d="M151.6 23.5L193.8 -3.0L226.0 -42.9L283.6 -47.0L281.2 -128.7L373.4 -90.3"/>
<path d="M153.4 26.3L182.2 7.5L216.5 -1.0L238.4 -31.8L277.0 -33.5L279.6 -90.8"/>
<path d="M172.0 26.7L203.3 15.2L234.9 4.6L268.2 -0.4L296.6 -20.8L324.4 -41.1"/>
<path d="M156.7 36.2L190.1 32.0L224.0 33.2L256.3 20.1L288.7 10.0L317.8 -13.2"/>
<path d="M145.8 5.2L155.8 5.4L160.2 13.6L162.4 22.1L166.1 29.2L172.7 36.8L171.7 45.8L170.1 54.8L159.8 59.1L156.5 66.3L153.3 75.7L143.5 75.5L136.1 79.7L127.8 78.5L119.2 79.8L111.8 75.6L102.9 73.7L97.1 67.0L94.2 58.6L90.9 51.1L92.8 42.7L88.0 34.4L91.7 26.6L98.3 21.0L102.6 14.7L107.7 8.7L114.2 3.6L121.9 0.6L130.3 -1.2L139.4 -2.2L145.2 6.5"/>
<path d="M149.6 90.3L138.6 93.3L127.2 97.1L115.2 96.5L104.8 90.2L94.4 84.7L85.5 76.8L83.4 64.5L77.2 55.1L75.2 44.0L77.9 33.0L78.7 21.9L84.4 12.4L88.4 1.1L99.0 -4.1L108.7 -9.7L118.6 -17.6L130.7 -15.0L143.0 -17.1L153.4 -10.5L162.8 -3.6L172.9 2.8L175.4 15.1L184.8 23.7L183.1 36.0L180.0 46.9L181.3 58.8L173.1 67.3L169.1 78.4L160.5 86.3L150.5 92.6"/>
<path d="M105.3 -21.7L118.7 -25.2L132.8 -31.6L147.3 -28.0L162.3 -25.3L172.6 -13.7L180.9 -2.0L187.9 10.0L193.0 22.9L196.3 36.5L200.3 51.3L194.8 65.3L190.2 79.8L180.7 91.8L167.2 98.8L153.0 102.7L139.5 106.8L125.3 110.7L111.6 104.9L97.1 102.5L84.9 94.4L77.5 81.7L69.6 70.2L57.9 59.0L59.2 43.6L60.1 29.1L64.2 15.1L68.3 0.5L78.7 -10.4L90.1 -20.0L103.7 -26.0"/>
<path d="M182.1 107.5L167.0 117.4L149.7 121.7L132.4 129.0L113.5 129.5L95.0 125.0L82.0 110.2L67.7 99.6L53.7 87.4L50.0 69.0L44.1 52.2L42.0 34.2L42.3 15.4L54.4 0.6L64.1 -14.1L75.9 -27.5L91.1 -37.0L108.1 -42.7L125.6 -48.6L143.6 -44.1L160.2 -38.0L179.6 -35.6L191.8 -21.1L202.9 -6.5L209.7 10.3L219.2 27.0L220.6 46.1L210.3 63.0L208.1 81.7L197.7 97.2L183.8 109.7"/>
<path d="M35.5 96.5L23.5 76.6L23.6 53.2L16.5 30.4L26.9 9.1L35.0 -11.8L46.5 -31.3L65.0 -44.5L81.0 -62.3L104.2 -66.3L126.8 -68.9L149.5 -66.7L172.9 -64.1L191.1 -49.2L210.1 -36.0L226.3 -18.8L232.3 4.1L241.4 25.9L239.0 49.4L233.4 71.6L225.1 93.0L211.3 111.1L195.1 127.3L175.0 138.0L153.1 143.4L131.2 152.4L108.7 146.0L87.4 138.6L67.5 128.3L48.5 115.5L32.9 98.1"/>
<path d="M2.2 -5.6L12.2 -32.4L33.0 -52.0L53.7 -70.8L78.8 -82.9L105.2 -92.1L133.3 -96.0L161.3 -91.7L187.0 -80.1L211.6 -66.5L230.3 -45.6L250.5 -25.2L260.0 1.9L267.2 29.8L266.7 58.8L256.7 86.0L243.3 110.9L229.3 136.1L205.1 151.9L179.7 164.3L152.9 172.9L124.9 171.9L96.3 173.1L69.6 162.8L48.3 144.1L23.8 129.0L8.4 104.7L-2.7 78.3L-1.9 49.6L-6.5 21.5L4.6 -4.7"/>
<path d="M290.0 55.2L283.2 88.3L270.3 119.6L247.4 144.4L222.9 166.4L196.9 188.3L163.1 192.8L130.7 203.3L96.9 199.2L64.6 188.7L37.7 168.4L9.9 149.5L-5.9 119.8L-21.0 90.5L-32.5 58.7L-29.5 25.0L-22.6 -7.5L-12.8 -39.9L9.2 -65.6L33.0 -89.3L62.0 -106.4L93.5 -119.0L127.3 -123.5L160.1 -114.3L192.1 -105.9L223.1 -92.4L247.9 -69.3L269.5 -43.1L277.0 -9.8L289.6 21.4L288.0 55.0"/>
<path d="M300.0 80.1L293.1 82.2"/>
<path d="M87.4 54.2L84.5 62.3"/>
<path d="M203.2 80.9L199.5 91.5"/>
<path d="M227.1 31.2L218.5 40.5"/>
<path d="M188.8 188.3L187.1 196.9"/>
<path d="M149.4 104.2L135.7 107.4"/>
<path d="M172.6 187.1L186.8 192.4"/>
<path d="M196.6 180.2L184.6 185.2"/>
<path d="M208.8 194.8L205.3 200.3"/>
<path d="M95.6 155.4L103.5 170.4"/>
<path d="M125.2 148.8L111.8 148.9"/>
<path d="M66.2 105.5L74.2 120.9"/>
<path d="M132.8 68.1L132.6 82.3"/>
<path d="M251.7 125.2L251.3 139.3"/>
<path d="M61.8 134.6L48.2 141.7"/>
<path d="M146.9 37.9L131.1 40.2"/>
<path d="M167.7 34.9L181.1 42.5"/>
<path d="M70.8 52.1L62.8 53.0"/>
<path d="M104.2 18.5L101.0 25.5"/>
<path d="M205.9 97.3L206.7 111.7"/>
<path d="M1.8 138.3L14.3 143.9"/>
<path d="M209.4 26.7L201.5 37.0"/>
<path d="M72.2 125.9L82.6 129.9"/>
<path d="M282.4 135.4L298.1 143.7"/>
<path d="M251.8 81.2L263.2 89.8"/>
<path d="M3.7 97.3L20.3 99.6"/>
<path d="M91.2 22.1L101.1 36.6"/>
<path d="M48.4 89.0L46.4 98.3"/>
<path d="M167.3 9.1L169.0 26.8"/>
<path d="M145.7 149.5L153.2 162.3"/>
<path d="M79.3 129.0L67.6 130.6"/>
<path d="M235.2 64.4L238.2 70.8"/>
<path d="M85.8 122.7L76.3 133.4"/>
<path d="M195.9 15.6L191.5 20.1"/>
<path d="M118.6 29.0L125.7 45.1"/>
<path d="M157.6 179.1L153.7 185.2"/>
<path d="M215.7 62.1L211.9 71.9"/>
<path d="M194.2 71.2L199.9 76.3"/>
<path d="M275.9 167.6L280.6 172.3"/>
<path d="M32.2 160.6L14.7 165.0"/>
<path d="M121.0 10.1L129.6 17.1"/>
<path d="M219.2 199.1L214.9 211.9"/>
<path d="M42.6 45.5L54.9 51.2"/>
<path d="M120.4 195.8L109.9 201.1"/>
<path d="M65.5 74.5L78.7 75.8"/>
<path d="M250.1 102.3L256.2 105.2"/>
<path d="M16.6 142.2L10.2 144.4"/>
<path d="M2.6 191.2L15.1 198.9"/>
<path d="M113.6 0.8L102.1 9.0"/>
<path d="M170.3 93.8L168.6 105.9"/>
<path d="M128.5 106.9L125.5 114.2"/>
<path d="M120.4 121.8L135.6 125.8"/>
<path d="M216.8 66.3L210.7 77.5"/>
<path d="M126.3 73.7L122.7 80.5"/>
<path d="M259.6 106.1L253.0 120.9"/>
<path d="M66.7 147.9L62.4 154.3"/>
<path d="M173.7 111.0L163.6 112.8"/>
<path d="M72.1 88.3L78.0 94.7"/>
<path d="M290.6 40.6L284.4 46.7"/>
<path d="M251.2 129.9L262.9 137.7"/>
<path d="M212.7 45.4L214.4 57.8"/>
<path d="M209.0 147.1L196.7 150.7"/>
<path d="M255.5 135.9L249.3 140.4"/>
<path d="M150.9 101.4L135.7 109.9"/>
<path d="M188.0 192.1L187.4 203.6"/>
<path d="M205.8 108.9L197.5 109.7"/>
<path d="M142.5 18.6L147.7 31.0"/>
<path d="M121.3 9.4L135.6 11.3"/>
<path d="M286.7 91.9L293.8 94.8"/>
<path d="M272.6 17.5L264.1 17.8"/>
<path d="M34.4 145.6L39.0 155.0"/>
<path d="M252.4 160.8L248.3 165.3"/>
<path d="M76.7 47.9L76.2 60.1"/>
<path d="M107.1 97.8L98.5 103.4"/>
<path d="M106.7 65.5L104.7 71.5"/>
<path d="M273.1 48.5L279.4 61.3"/>
<path d="M6.4 197.7L9.3 213.0"/>
<path d="M146.4 14.8L151.8 20.4"/>
<path d="M279.3 174.7L271.2 188.6"/>
<path d="M176.5 50.1L161.4 50.2"/>
<path d="M80.6 88.8L98.5 90.2"/>
<path d="M146.2 96.8L162.1 98.4"/>
<path d="M22.4 124.1L16.6 135.9"/>
<path d="M252.9 193.5L246.4 202.9"/>
<path d="M68.8 191.6L68.2 201.9"/>
<path d="M158.5 62.3L170.8 67.6"/>
<path d="M63.4 163.8L56.9 171.4"/>
<path d="M140.5 187.5L146.0 195.9"/>
<path d="M145.0 45.3L156.8 57.0"/>
<path d="M182.6 126.2L177.5 132.0"/>
<path d="M115.3 12.7L105.1 13.0"/>
<path d="M172.1 116.9L185.1 123.0"/>
<path d="M274.5 180.5L282.5 183.0"/>
<path d="M127.9 114.4L142.6 119.1"/>
<path d="M237.9 47.6L231.7 52.2"/>
<path d="M21.6 192.6L26.6 201.7"/>
<path d="M256.0 49.0L242.5 54.7"/>
<path d="M100.3 140.8L91.8 155.1"/>
<path d="M234.8 100.7L219.9 105.9"/>
<path d="M299.0 30.2L312.3 40.2"/>
<path d="M201.4 81.0L206.3 95.5"/>
<path d="M278.8 117.4L292.0 123.7"/>
<path d="M75.6 114.4L67.2 129.8"/>
<path d="M22.1 38.0L9.4 41.1"/>
<path d="M91.3 70.7L93.0 88.3"/>
<path d="M207.1 144.2L191.5 148.1"/>
<path d="M95.8 35.0L83.9 39.0"/>
<path d="M227.5 125.3L232.1 129.5"/>
<path d="M14.3 89.6L5.4 92.7"/>
<path d="M150.6 19.9L155.4 24.5"/>
<path d="M38.7 9.7L54.1 13.3"/>
<path d="M172.6 143.8L181.9 143.9"/>
<path d="M192.7 3.0L196.1 8.4"/>
<path d="M96.5 173.5L108.3 174.6"/>
<path d="M182.9 160.1L196.9 168.6"/>
<path d="M238.9 17.4L233.6 31.8"/>
<path d="M296.3 79.9L280.2 83.0"/>
<path d="M7.7 63.4L3.2 72.0"/>
<path d="M124.5 142.0L117.7 145.9"/>
<path d="M5.6 42.1L4.1 58.1"/>
<path d="M360.1 72.3L369.3 89.6"/>
<path d="M445.5 30.7L427.7 31.7"/>
<path d="M338.6 123.7L325.2 132.6"/>
<path d="M305.3 129.5L297.4 144.9"/>
<path d="M418.7 111.9L425.8 127.3"/>
<path d="M346.0 50.6L344.3 60.1"/>
<path d="M435.9 195.4L452.6 203.9"/>
<path d="M367.3 195.8L349.1 199.5"/>
<path d="M320.5 108.7L337.5 121.4"/>
<path d="M343.5 121.2L327.7 138.4"/>
<path d="M446.3 171.1L433.2 182.0"/>
<path d="M358.9 141.9L363.1 164.2"/>
<path d="M335.8 182.5L321.9 186.9"/>
<path d="M335.6 158.0L354.8 159.6"/>
<path d="M302.6 161.4L283.8 166.6"/>
<path d="M358.9 45.6L367.8 67.3"/>
<path d="M363.1 131.4L355.4 135.0"/>
<path d="M303.5 141.9L313.7 151.5"/>
<path d="M354.8 85.1L369.5 102.7"/>
<path d="M383.8 196.3L371.0 206.1"/>
<path d="M456.9 153.8L446.7 155.3"/>
<path d="M350.4 17.7L373.2 18.0"/>
<path d="M342.0 64.0L333.7 86.8"/>
<path d="M335.6 10.4L318.2 24.6"/>
<path d="M423.6 9.2L411.8 19.3"/>
<path d="M373.0 28.0L353.8 31.9"/>
<path d="M435.2 30.4L425.4 33.2"/>
<path d="M350.9 100.5L360.2 119.1"/>
<path d="M378.0 79.4L383.1 97.7"/>
<path d="M411.8 79.3L423.2 99.5"/>
</g>
<g fill="none" stroke="#f9d46a" stroke-width="1.1" stroke-linejoin="round"><path d="M23.0 0.0L25.7 7.7L24.4 15.4"/><path d="M0.0 42.4L16.7 38.6L42.4 29.6L60.4 21.9L72.0 15.4L82.3 7.7L84.8 0.0"/><path d="M0.0 70.7L15.4 68.0L38.6 59.0L55.3 45.0L66.8 36.0L84.8 29.6L102.8 28.3L120.0 25.7"/><path d="M0.0 59.0L12.9 54.0L32.0 47.6L42.4 47.6L54.0 50.0L66.8 51.4"/><path d="M120.0 11.6L135.4 10.3L149.6 15.4L156.0 28.3L156.0 42.4L152.0 55.3L143.0 64.3L131.6 66.8L120.0 66.8L108.0 60.0L103.0 45.0L106.0 25.0L120.0 11.6"/><path d="M124.0 24.0L138.0 24.0L146.0 34.0L143.0 52.0L130.0 58.0L117.0 53.0L114.0 38.0L124.0 24.0"/><path d="M177.8 0.0L180.4 12.9L176.6 27.0L183.0 36.0L186.8 43.7L185.6 56.6L192.0 69.4L197.0 74.5"/><path d="M202.0 0.0L204.8 10.3L215.0 27.0L217.7 37.3"/><path d="M233.0 0.0L235.7 25.7L240.0 32.0"/><path d="M217.7 42.4L240.0 45.0"/><path d="M10.0 100.0L25.7 125.7L34.7 142.4L72.0 164.0L120.0 167.0"/><path d="M54.0 100.0L77.0 120.6L120.0 151.4"/><path d="M0.0 148.8L28.3 152.7L77.0 179.7L120.0 182.0"/><path d="M240.0 46.3L270.8 48.8L290.0 48.8"/><path d="M276.0 0.0L274.7 25.7L270.8 48.8L273.4 56.6L281.0 61.7L282.4 72.0L278.6 79.7L290.0 82.3"/><path d="M240.0 38.6L259.3 37.3L290.0 41.0"/><path d="M254.0 20.6L259.3 37.3"/><path d="M240.0 25.7L245.0 42.4"/><path d="M327.4 38.6L360.0 38.6"/><path d="M355.7 0.0L350.5 12.9L348.0 38.6"/><path d="M291.4 65.6L304.0 66.8L303.0 77.0L312.0 79.7L317.0 90.0"/><path d="M240.0 129.6L256.7 138.6L255.4 154.0L259.3 160.4L288.8 161.7L312.0 164.3"/><path d="M324.8 100.0L324.8 120.6L330.0 129.6L350.5 100.0"/><path d="M312.0 143.7L323.5 146.3L330.0 138.6L351.8 138.6L360.0 142.4"/><path d="M252.9 166.8L252.9 182.3L240.0 184.8"/><path d="M360.0 39.9L411.4 38.6L468.0 38.6"/><path d="M378.0 0.0L375.4 38.6L385.7 59.0L380.6 84.8"/><path d="M411.4 38.6L421.7 61.7L442.3 72.0L439.7 84.8"/><path d="M437.0 0.0L447.4 25.7L444.9 38.6"/><path d="M437.0 102.9L444.9 115.7L437.0 133.7L421.7 144.0L406.3 154.3"/><path d="M360.0 144.0L390.9 154.3L424.3 156.9L468.0 164.6"/><path d="M360.0 174.9L372.9 177.4L396.0 185.1L411.4 200.0"/><path d="M120.0 0.0L122.0 11.0"/><path d="M152.0 15.4L165.0 0.0"/><path d="M154.7 52.7L158.6 66.8L161.0 83.5L162.4 100.0"/><path d="M130.0 67.0L128.0 100.0"/><path d="M100.0 0.0L105.0 30.0L103.0 45.0"/><path d="M60.0 100.0L75.0 85.0L90.0 82.0"/><path d="M200.0 100.0L215.0 130.0L240.0 140.0"/><path d="M300.0 100.0L315.0 120.0L320.0 150.0L318.0 200.0"/><path d="M340.0 180.0L360.0 178.0L400.0 170.0L440.0 180.0L468.0 190.0"/><path d="M400.0 60.0L410.0 90.0L420.0 120.0"/><path d="M0.0 120.0L30.0 110.0L60.0 90.0"/><path d="M0.0 90.0L40.0 85.0L80.0 80.0L110.0 95.0"/><path d="M136.0 100.0L150.0 130.0L165.0 160.0L200.0 175.0"/></g>
<g fill="none" stroke="#f2bb3c" stroke-width="1.45" stroke-linejoin="round" stroke-linecap="round"><path d="M0.0 3.9L23.0 9.0L51.4 16.7L68.0 20.0L102.8 27.6L120.0 32.0"/><path d="M65.6 0.0L66.8 20.6L64.3 37.3L66.8 51.4L72.0 60.4L78.4 69.4L90.0 82.3L100.3 92.5L106.7 100.0"/><path d="M43.7 60.4L66.8 52.7L77.0 47.6L95.0 38.6L105.4 36.0L120.0 33.4"/><path d="M0.0 77.0L19.3 69.4L29.6 66.8L46.3 60.4"/><path d="M60.4 92.5L77.0 78.4L92.5 66.8L110.5 54.0L120.0 48.8"/><path d="M74.5 100.0L92.5 83.5L109.3 69.4L120.0 60.4"/><path d="M102.8 54.0L104.0 32.0L110.5 16.7L120.0 10.3"/><path d="M156.0 42.4L174.0 45.0L186.8 43.7L217.7 33.4L240.0 24.4L291.4 6.4"/><path d="M154.7 52.7L171.4 63.0L188.0 73.3L195.8 74.5L204.8 68.0L213.8 65.6L229.0 72.0L240.0 77.0"/><path d="M221.5 0.0L222.8 25.7L220.0 41.0L215.0 43.7L208.7 55.3L205.5 68.0L208.7 83.5L210.0 100.0L212.5 125.7L199.7 154.0L177.8 183.5L171.4 200.0"/><path d="M158.6 100.0L189.4 79.7L203.5 72.0L240.0 61.7"/><path d="M0.0 146.3L50.0 100.0"/><path d="M0.0 192.5L42.4 159.0L78.4 100.0"/><path d="M54.0 200.0L77.0 146.3L100.3 100.0"/><path d="M29.6 154.0L27.0 172.0"/><path d="M129.0 100.0L134.0 142.4L129.0 154.0L128.4 200.0"/><path d="M163.0 100.0L161.0 132.0L153.4 161.7L154.7 200.0"/><path d="M136.7 151.4L177.8 183.5L192.0 200.0"/><path d="M213.8 112.8L222.8 177.0L225.4 200.0"/><path d="M240.0 64.3L265.7 77.0L288.8 90.0L299.0 95.0"/><path d="M256.7 83.5L288.8 92.5"/><path d="M240.0 102.6L255.4 105.0L282.4 123.0L301.7 137.3L327.4 160.4L349.3 182.3L360.0 192.5L366.0 200.0"/><path d="M240.0 25.7L291.4 6.4"/><path d="M153.9 51.4L200.0 38.6"/><path d="M152.0 14.1L164.8 0.0"/><path d="M112.1 14.1L95.4 0.0"/><path d="M103.1 27.0L80.0 23.0"/><path d="M103.1 45.0L80.0 46.3"/><path d="M109.6 61.7L80.0 79.7"/><path d="M122.4 66.8L99.3 100.0"/><path d="M131.4 66.8L130.0 100.0"/><path d="M185.4 0.0L186.7 48.8L200.0 77.0"/></g>
<path d="M291.4 0L290.8 45L288.8 77L286.3 100L283.7 100L281 112.8L282.4 123L288.8 148.8L288.8 161.7L278.6 177L263 200" fill="none" stroke="#ee9f30" stroke-width="2.4"/>
<path d="M291.4 6.4L308 0" fill="none" stroke="#ee9f30" stroke-width="2.2"/>
<path d="M299 95L323.5 95.8L345.4 90L360 84.8L383 91.3L416.6 95L437 90L468 84.8" fill="none" stroke="#f1bd2e" stroke-width="2.4"/>
<g fill="none" stroke="#e9b1a9" stroke-width="1.8" stroke-linejoin="round"><path d="M289.3 47.6L318.9 42.4L324.0 38.6"/><path d="M324.0 42.4L325.3 51.4L318.9 56.6L308.6 59.1L307.3 64.3L311.1 72.0L316.3 77.1L331.7 74.6L344.6 66.9L357.4 69.4L367.7 77.1L378.0 84.9L381.9 90.0L378.0 97.7L370.3 102.9L372.9 108.0L367.7 113.1L354.9 108.0L347.1 102.9L344.6 97.7L331.7 100.3L321.4 99.0L311.1 102.9L300.9 105.4L303.4 115.7L306.0 128.6L308.6 136.3L336.9 136.3L357.4 135.0L378.0 138.9L380.6 128.6L378.0 118.3L367.7 113.1"/></g>
<path d="M306.8 0L309.4 7.7L317 10.3L322.3 25.7L326 38.6" fill="none" stroke="#999" stroke-width="0.6"/>
<g fill="none" stroke="#8a8a8a" stroke-width="0.7" stroke-dasharray="3 1.5"><path d="M385.7 87.4L411.4 100.3L450 108L468 115.7"/><path d="M327 160L334 175L334 190"/><path d="M284 176L300 184L318 188L335 190"/></g>
<g font-family="Liberation Sans" paint-order="stroke" stroke="#fff" stroke-width="2.6" stroke-linejoin="round" stroke-opacity="0.85">
<text x="106.5" y="44" font-size="12.5" fill="#404040">Москва</text>
<text x="283" y="29.5" font-size="12.5" fill="#404040">Реутов</text>
<text x="411" y="33" font-size="12.5" fill="#777">Федурново</text>
<text x="410" y="73" font-size="12.5" fill="#777">Соболиха</text>
<text x="357.5" y="118.3" font-size="13.5" fill="#505050">Марусино</text>
<text x="301.5" y="137.9" font-size="12.8" fill="#404040">Люберцы</text>
<text x="273" y="159" font-size="13.6" fill="#505050">Котельники</text>
<text x="362.5" y="164.6" font-size="13.2" fill="#505050">Красково</text>
<text x="255" y="203" font-size="13.6" fill="#505050">Дзержинский</text>
<text x="362.5" y="196" font-size="12" fill="#808080">Пехорка</text>
<text x="438.5" y="198" font-size="13.6" fill="#505050">Быково</text>
<text x="455" y="166.6" font-size="12.5" fill="#808080">Ос</text>
<text x="-3" y="172" font-size="12.5" fill="#777">ово</text>
</g>
<g font-family="Liberation Sans"><text x="106.5" y="44" font-size="12.5" fill="#404040" stroke="#404040" stroke-width="0.08">Москва</text><text x="283" y="29.5" font-size="12.5" fill="#404040" stroke="#404040" stroke-width="0.08">Реутов</text><text x="411" y="33" font-size="12.5" fill="#777" stroke="#777" stroke-width="0.08">Федурново</text><text x="410" y="73" font-size="12.5" fill="#777" stroke="#777" stroke-width="0.08">Соболиха</text><text x="357.5" y="118.3" font-size="13.5" fill="#505050" stroke="#505050" stroke-width="0.08">Марусино</text><text x="301.5" y="137.9" font-size="12.8" fill="#404040" stroke="#404040" stroke-width="0.08">Люберцы</text><text x="273" y="159" font-size="13.6" fill="#505050" stroke="#505050" stroke-width="0.08">Котельники</text><text x="362.5" y="164.6" font-size="13.2" fill="#505050" stroke="#505050" stroke-width="0.08">Красково</text><text x="255" y="203" font-size="13.6" fill="#505050" stroke="#505050" stroke-width="0.08">Дзержинский</text><text x="362.5" y="196" font-size="12" fill="#808080" stroke="#808080" stroke-width="0.08">Пехорка</text><text x="438.5" y="198" font-size="13.6" fill="#505050" stroke="#505050" stroke-width="0.08">Быково</text><text x="455" y="166.6" font-size="12.5" fill="#808080" stroke="#808080" stroke-width="0.08">Ос</text><text x="-3" y="172" font-size="12.5" fill="#777" stroke="#777" stroke-width="0.08">ово</text></g>
<text x="92" y="212" font-family="Liberation Sans" font-size="22" fill="#c4c4c4" letter-spacing="7">Москва</text>
<ellipse cx="242" cy="106" rx="8" ry="2.5" fill="rgba(0,0,0,.10)"/>
<path d="M241 107L229.7 96.3A16 16 0 1 1 252.3 96.3Z" fill="#67ade2"/>
<circle cx="241" cy="85" r="6" fill="#f4f2df"/><path d="M235 88L247 82M241 79L243 91" stroke="#fad56c" stroke-width="1"/>
<circle cx="31" cy="31.400000000000002" r="15.8" fill="rgba(0,0,0,.08)"/>
<circle cx="31" cy="30.8" r="15.4" fill="#fff" stroke="#c9c9c9" stroke-width="1"/>
<g fill="none" stroke="#222"><circle cx="29.6" cy="29.8" r="5" stroke-width="1.5"/><path d="M33.3 33.5L36.8 37.0" stroke-width="2.4"/></g>
<circle cx="31" cy="70.39999999999999" r="15.8" fill="rgba(0,0,0,.08)"/>
<circle cx="31" cy="69.8" r="15.4" fill="#fff" stroke="#c9c9c9" stroke-width="1"/>
<g fill="none" stroke="#222"><circle cx="29.6" cy="68.8" r="5" stroke-width="1.5"/><path d="M33.3 72.5L36.8 76.0" stroke-width="2.4"/></g>
<path d="M27.5 29.8H31.7M29.6 27.7V31.9" stroke="#222" stroke-width="1.8"/>
<path d="M27.5 68.8H31.7" stroke="#222" stroke-width="1.8"/>
</svg></div>
<div class="abs" style="left:839px;top:355px;width:281px;height:259px;border-left:1px solid #ddd;border-right:1px solid #ddd"></div>
<div id="photo" class="abs" style="left:840px;top:355px;width:279px;height:84px;background:#6b6a55;overflow:hidden"><svg width="279" height="84" viewBox="0 0 279 84" style="position:absolute;left:0;top:0;filter:blur(0.8px)">
<defs>
<linearGradient id="gnd" x1="0" y1="0" x2="0" y2="1"><stop offset="0" stop-color="#a08c70"/><stop offset="1" stop-color="#b8a487"/></linearGradient>
<pattern id="corr" width="4" height="10" patternUnits="userSpaceOnUse"><rect width="4" height="10" fill="#b4b6b3"/><rect width="1.5" height="10" fill="#d2d4d1"/><rect x="3" width="1" height="10" fill="#8f918e"/></pattern>
</defs><g>
<rect width="279" height="84" fill="url(#gnd)"/>
<rect x="0" y="0" width="14" height="62" fill="#3e3634"/>
<rect x="4" y="0" width="8" height="58" fill="#55504e"/>
<rect x="140" y="0" width="28" height="40" fill="url(#corr)"/>
<rect x="140" y="38" width="28" height="4" fill="#8b5e42"/>
<path d="M142 32L152 30L160 38L150 42Z" fill="#e8e8e6"/>
<path d="M140 43L158 43L160 50L142 52Z" fill="#ddd"/>
<rect x="0" y="58" width="14" height="10" fill="#ccc"/>
<path d="M11 0H132L134 56L128 60L112 60L106 77L46 78L40 62L17 61L11 56Z" fill="#3e4b43"/>
<path d="M24 8H38L38 12H24Z" fill="#9ca39f"/>
<path d="M104 7H117V10H104Z" fill="#9ca39f"/>
<path d="M16 24L28 12L44 10L46 0H86L88 22L88 34L82 46L72 48L64 55L54 63L44 58L32 48L24 40L15 32Z" fill="#0e0e0e"/>
<path d="M44 36L52 30L58 26L64 30L68 40L68 48L62 55L52 58L45 50Z" fill="#d4d4d4"/><path d="M60 28L72 26L70 46L64 48Z" fill="#111"/>
<path d="M74 27L84 29L86 34L76 36Z" fill="#e0e0e0"/><path d="M78 38L86 37L86 44L80 45Z" fill="#e6e6e6"/>
<path d="M30 40L40 38L44 48L36 50Z" fill="#a8534a"/>
<path d="M62 56L72 54L74 64L64 64Z" fill="#c0a89a"/>
<circle cx="119" cy="50" r="3.5" fill="#222"/>
<path d="M5 84L15 72L32 68L38 72L32 84Z" fill="#2a2624"/>
<path d="M16 68L30 67L32 72L18 74Z" fill="#b8bcc2"/>
<path d="M113 84L117 73L130 72L138 80L136 84Z" fill="#2a2624"/>
<path d="M110 66L128 65L128 72L112 73Z" fill="#b0b4ba"/>
<path d="M55 77L68 75L70 84L56 84Z" fill="#e0d8dc"/>
<path d="M95 80L103 79L104 84L96 84Z" fill="#ddd"/>
<path d="M166 0H279V44L258 45L250 55L180 56L170 48L166 40Z" fill="#33452f"/>
<rect x="175" y="0" width="40" height="44" fill="#2f4130"/>
<path d="M178 44H258L256 56H182Z" fill="#161915"/>
<rect x="180" y="12" width="1.2" height="8" fill="#c8c8bc"/>
<rect x="207" y="16" width="1" height="14" fill="#9aa29a"/>
<rect x="218" y="20" width="1" height="22" fill="#8a9a8a"/>
<text x="221" y="12" font-family="Liberation Sans" font-size="8" font-weight="bold" fill="#c9c46a">43 43 III</text>
<circle cx="182" cy="60" r="10" fill="#1e1e1e"/>
<rect x="181" y="47" width="7" height="13" fill="#a8acb0"/>
<circle cx="265" cy="57" r="9.5" fill="#1e1e1e"/>
<rect x="264" y="45" width="6" height="12" fill="#a8acb0"/>
<path d="M236 46L250 45L252 56L238 58Z" fill="#4a4a45"/>
<path d="M140 70L158 68L160 74L142 76Z" fill="#d8d4d6"/>
<path d="M184 80L196 79L197 83L185 83Z" fill="#e8e4e0"/>
</g></svg>
</div>
<div id="doc" class="abs" style="left:840px;top:443px;width:137px;height:129px;background:#fff;overflow:hidden"><svg width="137" height="129" viewBox="0 0 137 129" style="position:absolute;left:0;top:0">
<rect width="137" height="129" fill="#fff"/>
<rect x="135.8" y="0" width="1" height="129" fill="#c8c8c8"/>
<g fill="none" stroke="#5aaee0" stroke-width="1.2">
<circle cx="88.5" cy="19.6" r="11.8"/><circle cx="88.5" cy="19.6" r="8.8" stroke-width="0.5"/>
<circle cx="40" cy="56" r="12" stroke="#a6d2ee" stroke-width="0.9"/>
<circle cx="94.6" cy="52.6" r="13" stroke="#d6e8f4" stroke-width="0.9"/>
<circle cx="33.9" cy="95" r="12" stroke="#7cc0ea"/><circle cx="33.9" cy="95" r="8.6" stroke="#9ccfee" stroke-width="0.5"/>
<circle cx="99" cy="96" r="12" stroke="#8cc6ea"/><circle cx="99" cy="96" r="8.6" stroke="#aad6f0" stroke-width="0.5"/>
</g>
<g fill="none" stroke="#6e6e6e" stroke-width="0.8" stroke-dasharray="1.4 0.5">
<path d="M71 2.2H118M71 4.8H125M80 7.4H118"/>
<path d="M107.6 14.4H121.5M109 17.8H120M107.6 21.3H121.5"/>
<path d="M26 33.5H52M15.6 36H64M19 38.7H59M81.6 33.5H109M81.6 36H118M86 38.7H106"/>
<path d="M15.6 43H66M15.6 44.7H66M73 43H121.5M73 44.7H121.5M73 47.3H121.5" stroke="#9a9a9a" stroke-width="0.6"/>
<path d="M12 57H68M69 57H121.5" stroke="#888" stroke-width="0.5" stroke-dasharray="none"/>
<path d="M21 61.2H61M76 61.2H118"/>
<path d="M29.5 77.7H50M17 80.3H59M22 83H57M88.5 77H106M73 79.5H118M76 82H125"/>
<path d="M15.6 86.4H62.5M71 86.4H125M73 90H121.5" stroke="#9a9a9a" stroke-width="0.6"/>
<path d="M10.4 97.7H62.5M69 97.7H121.5" stroke="#888" stroke-width="0.5" stroke-dasharray="none"/>
<path d="M21 102H59M76 102H118"/>
<path d="M26 116.8H111M24 120.3H113"/>
<path d="M52 122.9H78" stroke="#aaa" stroke-width="0.5"/>
<path d="M10 119.5H125" stroke="#999" stroke-width="0.4" stroke-dasharray="none"/>
</g>
<path d="M40 110.7H99" stroke="#555" stroke-width="1.5" stroke-dasharray="2.2 0.7"/>
<g fill="none" stroke="#2d45a8" stroke-width="0.7" stroke-linejoin="round">
<path d="M5 55L8 52L12 54L10 57L18 55L24 53L30 56L36 52L42 55L48 53L55 54L64 53"/>
<path d="M97 55L101 51L104 56L110 53L116 56L124 53L130 55"/>
<path d="M27 61L31 59L35 62M46 60L50 58L54 61"/>
<path d="M80 61L84 59L88 62M96 61L100 59L104 62"/>
<path d="M73 83L80 81L86 84L94 81L102 84L110 81L118 83L126.7 81"/>
<path d="M29.5 96L35 93L40 98L45 94L52 97L60.8 94"/>
<path d="M104 97L110 93L116 97L122 93L126.7 95"/>
<path d="M87 10L88 30M84 22L92 25M38 88L39 104M88 46L90 60"/>
<path d="M28 102L32 100L36 103M81 102L85 100L89 103"/>
</g>
<g fill="#bbb"><rect x="1" y="0" width="1.4" height="2"/><rect x="1" y="9" width="1.4" height="2"/><rect x="1" y="18.7" width="1.4" height="2"/><rect x="1" y="29" width="1.4" height="2"/><rect x="1" y="38.7" width="1.4" height="2"/><rect x="1" y="49" width="1.4" height="2"/><rect x="1" y="59.5" width="1.4" height="2"/><rect x="1" y="70" width="1.4" height="2"/><rect x="1" y="80" width="1.4" height="2"/><rect x="1" y="90.7" width="1.4" height="2"/><rect x="1" y="101" width="1.4" height="2"/><rect x="1" y="111" width="1.4" height="2"/></g>
</svg>
</div>
<div class="abs" style="left:982px;top:444px;width:137px;height:128px;background:#eee"></div>
<svg class="abs" style="left:1005px;top:495px" width="35" height="32" viewBox="1005 495 35 32"><g fill="#3c7dc0">
<circle cx="1020.9" cy="505.6" r="6.8"/><circle cx="1030.1" cy="508.9" r="5.5"/><circle cx="1014.5" cy="510.9" r="4"/>
<rect x="1014.5" y="506" width="15.6" height="8.8"/>
</g>
<rect x="1018.9" y="509.2" width="8.1" height="6" fill="#eee"/>
<g fill="#3c7dc0"><rect x="1021.1" y="511.2" width="3.9" height="6.5"/><path d="M1017.2 517.1H1028.4L1022.8 523.2Z"/></g>
</svg>

<div class="t" style="left:1041px;top:496px;font-size:24px;line-height:24px;color:#3a7ec0;font-weight:normal;">PDF</div>
<div class="t" style="left:850px;top:580px;font-size:14px;line-height:14px;color:#333;font-weight:normal;">Заданию назначили организацию:</div>
<div class="t" style="left:850px;top:600px;font-size:14px;line-height:14px;color:#333;font-weight:normal;">"Участок 1".</div>
<svg class="abs" style="left:1150px;top:534px" width="20" height="16" viewBox="1150 534 20 16"><path d="M1161.3 537.1L1167.6 542.3L1161.3 547.7V543.6Q1158.2 543.5 1156 545L1154 546.9Q1154.4 543.6 1156.3 541.8Q1158.5 539.9 1161.3 539.8Z" fill="#777"/></svg>

<svg class="abs" style="left:834px;top:611px" width="24" height="24" viewBox="834 611 24 24"><path d="M845.4 628.4L852.1 621.5Q853.6 619.6 852 617.6Q850 615.6 847.8 617.1L839.5 625.1Q838.1 627 839.6 628.3Q841.2 629.4 842.8 628.1L849.8 621.3Q850.6 620 849.6 618.9Q848.6 618.1 847.6 618.9L843.6 623.1" fill="none" stroke="#3f80c4" stroke-width="1.3"/></svg>

<div class="inp" style="left:839px;top:639px;width:468px;height:114px"></div>
<div class="t" style="left:852px;top:649px;font-size:14px;line-height:14px;color:#999;font-weight:normal;">Для отправки комментария нажмите Enter.</div>
<svg class="abs" style="left:1295px;top:741px" width="12" height="12" viewBox="1295 741 12 12"><path d="M1298 750.6L1305.2 743.4M1302 750.6L1305.2 747.4" stroke="#555" stroke-width="1"/></svg>

<div class="frame"></div>
</body></html>
